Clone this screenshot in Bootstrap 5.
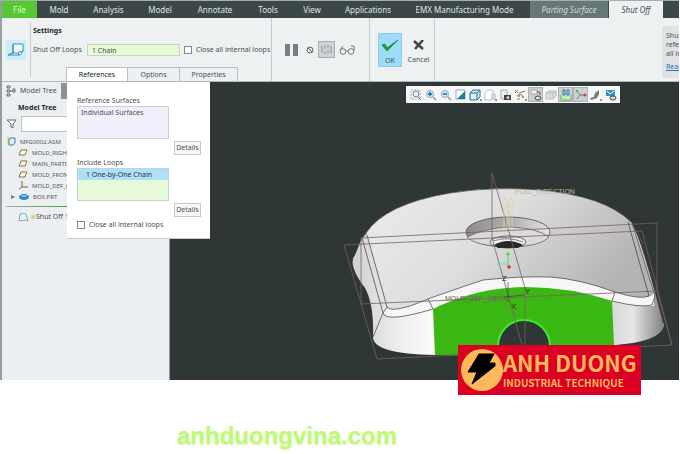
<!DOCTYPE html>
<html lang="en">
<head>
<meta charset="utf-8">
<meta name="viewport" content="width=device-width, initial-scale=1">
<title>Shut Off</title>
<link href="https://cdn.jsdelivr.net/npm/bootstrap@5.3.0/dist/css/bootstrap.min.css" rel="stylesheet">
<style>
body{font-family:"Noto Sans","Open Sans",sans-serif;font-size:7px;line-height:10px;color:#4b4f51;background:#fff}
button,input{font:inherit;color:inherit}
svg{display:block;flex:none}
.app{border-left:2px solid #989da0;border-top:1px solid #a9adae;margin-right:1px}
.menubar{background:#3c4848;height:17px;font-size:8px}
.menubar a{color:#dfe5e5;text-decoration:none;height:17px;display:flex;align-items:center;justify-content:center;white-space:nowrap}
.menubar .file{background:#56c833;width:35px;color:#d9ffc6}
.menubar .ctx{background:#657777;width:78px;font-style:italic;color:#d0dada}
.menubar .now{background:#edf1f2;width:54px;font-style:italic;color:#4b4f51;margin-left:1px}
.w44{width:44px}.w48{width:48px}.w55{width:55px}.w62{width:62px}.w68{width:68px}.w125{width:125px}
.ribbon{background:#edf1f2;height:64px;border-bottom:1px solid #b4babc}
.rule-r{border-right:1px solid #c5cacc}
.g-icon{width:29px}.g-settings{width:241px;padding-left:2px}.g-preview{width:98px}.g-confirm{width:65px}
.loops-label{width:54px}
.loops{width:93px;height:12px;border:1px solid #c9d6bd;background:#e6fad5;padding:0 4px;border-radius:0}
.form-check-input.tick{width:8px;height:8px;margin:0;border:1px solid #85898b;border-radius:0;background-color:#fff;flex:none}
.panel-tabs{padding-left:33px}
.panel-tabs button{height:14px;border:1px solid #b9bec0;border-bottom:0;border-left:0;background:#edf0f2;padding:0;text-align:center}
.panel-tabs button.active{background:#fff;color:#222;border-left:1px solid #b9bec0}
.t1{width:62px}.t2{width:52px}.t3{width:58px}
.tool{border:0;background:none;padding:0;display:flex;align-items:center;justify-content:center}
.okbtn{background:#9edcfb;border:1px solid #8ccdf0;width:24px;height:34px;flex-direction:column;justify-content:space-between;padding-top:5px}
.cancelbtn{width:25px;height:32px;flex-direction:column;justify-content:space-between;padding-top:7px}
.confirm{padding-top:15px}
.hint{background:#e0e2e4;height:52px;width:17px;padding:5px 0 0 4px;overflow:hidden;white-space:nowrap;line-height:9px}
.hint a{color:#2478b0;margin-top:4px;display:block}
.tree{background:#ebeff1;width:168px;border-right:1px solid #8c9799;height:298px}
.tree li{height:11px;display:flex;align-items:center;white-space:nowrap}
.tree ul{font-size:6px;color:#55595b;margin-top:4px}
.tree-tab{height:18px}
.tree-chip{width:12px;height:16px;background:#8b9294}
.tree-title{margin-top:3px;margin-bottom:3px}
.tree .filter{height:16px;width:70px;border:1px solid #bfc4c6;border-radius:0;background:#fff}
.insert{height:1px;background:linear-gradient(90deg,#a5ada5,#37a63c 40%);margin:4px 3px 5px 4px}
.view{background:#2f3636;overflow:hidden}
.flyout{position:absolute;left:65px;top:0;width:143px;background:#fff;padding:14px 9px 8px 10px;border-bottom:1px solid #c9cdcf}
.picker{width:92px;height:33px;border:1px solid #cdcdd2;line-height:11px}
.picker .item{padding-left:3px}
.picker.surf{background:#f2eefc}
.picker.chain{background:#e6fad9}
.picker .sel{background:#ade0fa;padding-left:8px;color:#333}
.det-row{margin:2px 0 3px;display:flex;justify-content:flex-end}
.det{width:27px;height:14px;background:#f7f7f7;border:1px solid #c6c9cb;padding:0;line-height:10px}
.viewbar{position:absolute;left:404px;top:4px;height:17px;background:#f4f6f7;padding:0 2px}
.viewbar button{width:15px;height:15px}
.viewbar .on{background:#cdd0d2;border:1px solid #aeb2b4}
.brand{position:absolute;left:456px;top:263px;width:183px;height:50px;background:#db0023;color:#ffb95a;padding:0 3px;font-family:"Noto Sans CJK SC",sans-serif;font-weight:700;white-space:nowrap}
.brand .big{font-size:22px;line-height:26px}
.brand .sub{font-size:10px;line-height:16px}
.site{font:700 24px/30px "Liberation Sans",Arial,sans-serif;color:#bdfb70;text-decoration:none;text-shadow:0 1px 2px #dde6d2}
.site:hover{color:#bdfb70}
.foot{padding:41px 0 0 177px}
</style>
<script src="https://cdn.jsdelivr.net/npm/bootstrap@5.3.0/dist/js/bootstrap.bundle.min.js"></script>
</head>
<body>
<div class="app">
<nav class="menubar d-flex" aria-label="Ribbon tabs">
<a class="file" href="#">File</a>
<div class="d-flex flex-fill">
<a href="#" class="w44">Mold</a><a href="#" class="w55">Analysis</a><a href="#" class="w48">Model</a><a href="#" class="w62">Annotate</a><a href="#" class="w44">Tools</a><a href="#" class="w44">View</a><a href="#" class="w68">Applications</a><a href="#" class="w125">EMX Manufacturing Mode</a>
</div>
<a class="ctx" href="#">Parting Surface</a>
<a class="now me-3" href="#">Shut Off</a>
</nav>

<header class="ribbon d-flex">
<div class="g-icon rule-r d-flex align-items-center my-1 px-1">
<svg width="20" height="20" viewBox="0 0 20 20"><rect width="20" height="20" fill="#c9edf9"/><path d="M7 4h10v7l-3 4H2l5-2z" fill="#eefaff" stroke="#428bac"/><path d="M7 4v9l-5 2M7 13h5M12 15l1-3 4-1" fill="none" stroke="#428bac"/></svg>
</div>
<div class="g-settings rule-r d-flex flex-column justify-content-between">
<div>
<div class="fw-bold pt-1 mt-1 text-dark">Settings</div>
<div class="d-flex align-items-center mt-1 pt-1">
<label for="loops" class="loops-label text-nowrap">Shut Off Loops</label>
<input id="loops" class="loops" value="1 Chain">
<input id="c1" type="checkbox" class="form-check-input tick ms-1"><label for="c1" class="ps-1 text-nowrap">Close all internal loops</label>
</div>
</div>
<div class="panel-tabs d-flex"><button class="active t1">References</button><button class="t2">Options</button><button class="t3">Properties</button></div>
</div>
<div class="g-preview rule-r d-flex align-items-center justify-content-center gap-1">
<button class="tool me-1" aria-label="Pause"><svg width="13" height="12"><path d="M0 0h5v12H0zM8 0h5v12H8z" fill="#777d80"/></svg></button>
<button class="tool" aria-label="No preview"><svg width="8" height="8"><path d="M1.800 1.800l4.400 4.400" stroke="#666"/><circle cx="4" cy="4" r="3" fill="none" stroke="#666"/></svg></button>
<button class="tool" aria-label="Feature preview"><svg width="17" height="17"><rect x=".5" y=".5" width="16" height="16" fill="#d0d3d5" stroke="#a9adaf"/><path d="M3 6l1-1v7M7 4v4M7 10v3M10 4v3M10 9v4M13 5v7l1-1" fill="none" stroke="#92979a"/></svg></button>
<button class="tool" aria-label="Verify"><svg width="17" height="10"><g fill="none" stroke="#777"><circle cx="4" cy="6.500" r="2.800"/><circle cx="12" cy="6.500" r="2.800"/><path d="M7 6h2M1 5l3-4M15 6V1h-3"/></g></svg></button>
</div>
<div class="g-confirm confirm rule-r d-flex gap-1 ps-2">
<button class="tool okbtn"><svg width="18" height="14"><path d="M1 6l5 6L17 1 6 9 4 5z" fill="#26963a" stroke="#26963a"/></svg><span>OK</span></button>
<button class="tool cancelbtn"><svg width="12" height="10"><path d="M1 1l9 8M10 0L2 9" stroke="#444" stroke-width="2.500"/></svg><span>Cancel</span></button>
</div>
<div class="hint ms-auto mt-2">Shut off<br>references<br>all internal<a href="#">Read more</a></div>
</header>

<main class="d-flex position-relative">
<aside class="tree flex-shrink-0">
<div class="tree-tab d-flex align-items-center ps-1"><svg width="10" height="12" class="me-1"><g fill="none" stroke="#666"><path d="M1 1h3v2H1zM1 5h3v2H1zM1 9h3v2H1zM7 4h2v3H7zM4 6h3"/></g></svg><span>Model Tree</span><span class="tree-chip ms-1"></span></div>
<div class="tree-title fw-bold ms-3 text-dark">Model Tree</div>
<div class="d-flex align-items-center ps-1 gap-1"><svg width="11" height="10"><path d="M1 1h9L7 5v4L5 8V5z" fill="#fff" stroke="#666"/></svg><input class="filter" aria-label="Filter tree"></div>
<ul class="list-unstyled mb-0">
<li class="ps-1 gap-1"><svg width="10" height="9"><path d="M1 0h4v8H1z" fill="#f0d79a"/><path d="M3 2l2-1h4v5L7 8H3z" fill="#d7f1fb" stroke="#3186ae"/></svg>MFG0002.ASM</li>
<li class="ps-3 gap-1"><svg width="10" height="7"><path d="M3 1h6L7 6H1z" fill="#fff9df" stroke="#81744e"/></svg>MOLD_RIGHT</li>
<li class="ps-3 gap-1"><svg width="10" height="7"><path d="M3 1h6L7 6H1z" fill="#fff9df" stroke="#81744e"/></svg>MAIN_PARTING</li>
<li class="ps-3 gap-1"><svg width="10" height="7"><path d="M3 1h6L7 6H1z" fill="#fff9df" stroke="#81744e"/></svg>MOLD_FRONT</li>
<li class="ps-3 gap-1"><svg width="10" height="9"><path d="M4 0v6L1 8M4 6h6" fill="none" stroke="#75633e"/></svg>MOLD_DEF_CSYS</li>
<li class="ps-2 gap-1"><svg width="5" height="6"><path d="M1 1l4 2-4 2z" fill="#777"/></svg><svg width="10" height="6"><ellipse cx="5" cy="3" rx="5" ry="3" fill="#2389c8"/><ellipse cx="5" cy="2" rx="3" ry="1" fill="#81c9ef"/></svg>BOX.PRT</li>
</ul>
<div class="insert"></div>
<div class="d-flex align-items-center ps-3"><svg width="12" height="9"><path d="M2 1q4-1 6 0l2 7-3-1-6 1z" fill="#e2f4fb" stroke="#7fa8b8"/></svg><svg width="6" height="6"><path d="M3 0v6M0 3h6M1 1l4 4M5 1L1 5" stroke="#d8c650" stroke-width=".7"/></svg>Shut Off 1</div>
</aside>

<section class="view flex-fill" aria-label="Model view">
<svg width="509" height="298" viewBox="170 82 509 298">
<defs>
<linearGradient id="top" x1="0" y1="0" x2="1" y2=".4"><stop offset="0" stop-color="#ebebeb"/><stop offset=".5" stop-color="#dedede"/><stop offset="1" stop-color="#b4b4b4"/></linearGradient>
<linearGradient id="left"><stop offset="0" stop-color="#cfcfcf"/><stop offset=".15" stop-color="#eee"/><stop offset=".3" stop-color="#fff"/><stop offset="1" stop-color="#c6c6c6"/></linearGradient>
<linearGradient id="right"><stop offset="0" stop-color="#d8d8d8"/><stop offset=".4" stop-color="#e6e6e6"/><stop offset="1" stop-color="#808080"/></linearGradient>
<linearGradient id="wall"><stop offset="0" stop-color="#8c8c8c"/><stop offset=".6" stop-color="#b5b5b5"/><stop offset="1" stop-color="#e4e4e4"/></linearGradient>
</defs>
<path d="M366 233Q385 204 450 193Q495 186 540 190Q605 196 631 222Q640 232 644 250L664 323Q666 338 615 345L435 355Q373 354 373 337Q374 304 365 288Q347 264 355 255L362 238Z" fill="url(#left)"/>
<path d="M612 300L652 306 655 295Q665 320 664 326Q660 342 614 345Z" fill="url(#right)"/>
<path d="M366 233Q385 204 450 193Q495 186 540 190Q605 196 631 222L654 295Q655 306 612 292Q580 279 550 277Q520 276 483 280Q450 291 428 299Q393 314 387 307Z" fill="url(#top)"/>
<path d="M387 307Q393 314 428 299Q450 291 483 280Q520 276 550 277Q580 279 615 292Q650 302 654 293V306Q625 306 612 301Q570 287 525 287Q475 288 433 309Q386 323 383 313Z" fill="#f6f6f6"/>
<path d="M433 309Q475 288 525 287Q570 287 612 301L614 345V354L435 355Z" fill="#3bb714"/>
<circle cx="524" cy="346" r="26" fill="#2f3636" stroke="#3df02a" stroke-width="2"/>
<path d="M434 356h30v24h-30zM500 356h60v24h-60z" fill="#2f3636"/>
<ellipse cx="508" cy="232" rx="42" ry="15" fill="url(#wall)" stroke="#383838" stroke-width=".7"/>
<path d="M467 237Q485 228 510 227Q537 228 549 237Q540 247 508 247Q475 246 467 237Z" fill="#dadada" stroke="#444" stroke-width=".6"/>
<ellipse cx="508" cy="242" rx="18" ry="6" fill="#eee" stroke="#444" stroke-width=".8"/><path d="M494 245Q508 237 523 245L518 248H498Z" fill="#252a2a"/><path d="M493 241Q508 236 523 242" fill="none" stroke="#555" stroke-width=".7"/>
<g fill="none" stroke="#3a3a3a" stroke-width=".7">
<path d="M366 233Q385 204 450 193Q495 186 540 190Q605 196 631 222M362 238L383 313 373 337M367 235L387 307Q393 314 428 299Q450 291 483 280Q520 276 550 277Q580 279 615 292Q640 300 649 296L628 222M383 313Q386 323 433 309M612 301Q640 308 652 305L655 296 632 223M387 307l-4 6M428 299l5 10M615 292l-3 9M362 238l5-5"/>
<path d="M633 224Q642 238 664 323" stroke-width="2"/>
</g>
<g fill="none" stroke="#795f64" stroke-width=".8"><path d="M344 245L377 359 672 345 642 231ZM361 238V304L657 291V223ZM657 291L672 345M492 173V238L522 345M492 173L525 288V345"/></g>
<path d="M504 229v-25h-3l4-6 4 6h-2v25M509 229v-25h-2l4-6 4 6h-3v25" fill="none" stroke="#d9d3a1" stroke-width=".8"/>
<g font-family="Liberation Sans" font-size="8"><text x="515" y="194" font-size="7" fill="#bdb99b">PULL_DIRECTION</text><text x="445" y="301" font-size="7" fill="#735f65">MOLD_DEF_CBOX</text><g fill="#333"><text x="502" y="281">Z</text><text x="525" y="294">Y</text><text x="511" y="309">X</text></g></g>
<path d="M508 282v20M504 297l20-2" stroke="#444" stroke-width=".7"/>
<path d="M508 266v-12" stroke="#4ee253"/><path d="M497 264h11" stroke="#54dfe4"/><circle cx="508" cy="254" r="1.500" fill="#32df39"/><circle cx="509" cy="267" r="1.800" fill="#e12b37"/>
</svg>
</section>

<div class="viewbar d-flex align-items-center" role="toolbar" aria-label="View tools">
<button class="tool" aria-label="Refit"><svg width="12" height="12"><path d="M1 1h9v9H1z" fill="none" stroke="#aaa" stroke-dasharray="2 1"/><circle cx="6" cy="5" r="3" fill="#e1f2fa" stroke="#66899a"/><path d="M8 8l3 3" stroke="#777"/></svg></button>
<button class="tool" aria-label="Zoom in"><svg width="12" height="12"><circle cx="5" cy="5" r="3.500" fill="#d8f0fb" stroke="#7ba9bf"/><path d="M3 5h4M5 3v4" stroke="#146d9d" stroke-width="1.500"/><path d="M8 8l3 3" stroke="#999" stroke-width="1.500"/></svg></button>
<button class="tool" aria-label="Zoom out"><svg width="12" height="12"><circle cx="5" cy="5" r="3.500" fill="#d8f0fb" stroke="#7ba9bf"/><path d="M3 5h4" stroke="#146d9d" stroke-width="1.500"/><path d="M8 8l3 3" stroke="#999" stroke-width="1.500"/></svg></button>
<button class="tool" aria-label="Repaint"><svg width="11" height="11"><path d="M1 1h9v9H1z" fill="#fff" stroke="#9ab"/><path d="M10 2v8H2z" fill="#207a9b"/></svg></button>
<button class="tool" aria-label="Display style"><svg width="13" height="12"><path d="M1 4l3-3h7v7l-3 3H1zM1 4h7v7M8 4l3-3" fill="#d8effa" stroke="#28718f"/><path d="M12 10v2" stroke="#333"/></svg></button>
<button class="tool" aria-label="Saved views"><svg width="13" height="12"><path d="M1 4l3-3h5v7l-2 3H1z" fill="#fff" stroke="#a8ccdb"/><path d="M8 5h3v5H8z" fill="#dde" stroke="#bbb"/><path d="M12 10v2" stroke="#333"/></svg></button>
<button class="tool" aria-label="View manager"><svg width="12" height="12"><path d="M1 1h6v9H1z" fill="#eee" stroke="#aaa"/><path d="M4 6h7v5H4z" fill="#444"/><circle cx="8" cy="8.500" r="1.500" fill="#ccc"/></svg></button>
<button class="tool" aria-label="Datum display"><svg width="13" height="12"><path d="M1 1l3 3M4 1L1 4M5 4l6-2M3 7l3-2 4 3M3 10h3" fill="none" stroke="#705f42" stroke-width=".8"/><path d="M4 6h2v2H4zM8 7h2v2H8z" fill="#bb9850"/><path d="M12 10v2" stroke="#333"/></svg></button>
<button class="tool on" aria-label="Annotation display"><svg width="12" height="12"><path d="M1 1h6v4H1z" fill="#fff2cf" stroke="#aaa"/><path d="M7 3h3v3" fill="none" stroke="#555"/><ellipse cx="8" cy="9" rx="3" ry="2" fill="#ddd" stroke="#444"/></svg></button>
<button class="tool" aria-label="Section"><svg width="12" height="10"><path d="M1 3l3-2h7v5L8 9H1zM1 3h7v6M8 3l3-2" fill="#ddd" stroke="#bcbcbc"/></svg></button>
<button class="tool on" aria-label="Mold display"><svg width="12" height="12"><path d="M1 6v5h10V6" fill="#caebb6" stroke="#5cb46d"/><path d="M3 1h2v5H3zM7 1h2v5H7z" fill="#bfe3f0" stroke="#237ba0"/></svg></button>
<button class="tool on" aria-label="Spin center"><svg width="12" height="12"><path d="M1 1l4 5-3 4" fill="none" stroke="#31a4a0"/><path d="M5 6h5" stroke="#c44"/><circle cx="10" cy="6" r="1.500" fill="#c44"/><circle cx="2" cy="2" r="1" fill="#3a4"/></svg></button>
<button class="tool" aria-label="Simulation"><svg width="13" height="12"><path d="M1 9l4-1 1-4 4-3v4L8 9l-6 2z" fill="#777"/><path d="M12 10v2" stroke="#333"/></svg></button>
<button class="tool" aria-label="Show"><svg width="12" height="12"><path d="M1 1h9v6H1z" fill="#3793bc"/><path d="M2 2l3 3 4-3" fill="none" stroke="#fff"/><ellipse cx="8" cy="9" rx="3" ry="2" fill="#ddd" stroke="#444"/></svg></button>
</div>

<div class="flyout">
<div>Reference Surfaces</div>
<div class="picker surf"><div class="item">Individual Surfaces</div></div>
<div class="det-row"><button class="det">Details</button></div>
<div>Include Loops</div>
<div class="picker chain"><div class="sel">1 One-by-One Chain</div></div>
<div class="det-row"><button class="det">Details</button></div>
<div class="d-flex align-items-center gap-1"><input id="c2" type="checkbox" class="form-check-input tick"><label for="c2">Close all internal loops</label></div>
</div>

<div class="brand d-flex align-items-center"><svg width="42" height="44" viewBox="0 0 42 44"><circle cx="21" cy="22" r="21" fill="#ffb95a"/><path d="M18 6h15l-5 9h6v3L11 36l5-12H7z" stroke="#000" stroke-linejoin="round"/></svg><div><div class="big">ANH DUONG</div><div class="sub">INDUSTRIAL TECHNIQUE</div></div></div>
</main>
</div>
<footer class="foot"><a class="site" href="#">anhduongvina.com</a></footer>
</body>
</html>
